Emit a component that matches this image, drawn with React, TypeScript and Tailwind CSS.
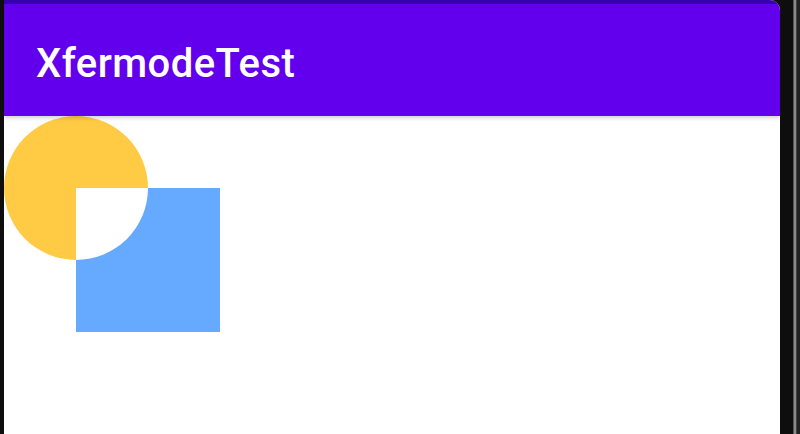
import React from "react";

export default function App() {
  return (
    <div className="w-[800px] h-[434px] flex bg-[#0e0e0e] overflow-hidden" style={{ fontFamily: "Roboto, 'Noto Sans', sans-serif" }}>
      <div className="w-[4px] h-full bg-[#0e0e0e]" />
      <div className="w-[776px] h-full flex flex-col bg-white rounded-tr-[10px] overflow-hidden">
        <div className="h-[4px] bg-[#3700B3] shrink-0" />
        <div className="relative z-10 h-[112px] shrink-0 bg-[#6200EE] flex items-center pl-[32px] shadow-[0_2px_4px_rgba(0,0,0,0.18)]">
          <span className="text-white text-[40px] font-medium leading-none tracking-[0.45px] mt-[7px]">XfermodeTest</span>
        </div>
        <div className="flex-1 bg-white">
          <svg width="220" height="220" viewBox="0 0 220 220" className="block">
            <circle cx="72" cy="72" r="72" fill="#FFCB45" />
            <rect x="72" y="72" width="144" height="144" fill="#66AAFF" />
            <path d="M72 72 L144 72 A72 72 0 0 1 72 144 Z" fill="#ffffff" />
          </svg>
        </div>
      </div>
      <div className="w-[13px] h-full bg-[#0e0e0e]" />
      <div className="w-[1px] h-full bg-[#555555]" />
      <div className="w-[2px] h-full bg-[#8a8a8a]" />
      <div className="w-[1px] h-full bg-[#444444]" />
      <div className="w-[3px] h-full bg-[#222222]" />
    </div>
  );
}
